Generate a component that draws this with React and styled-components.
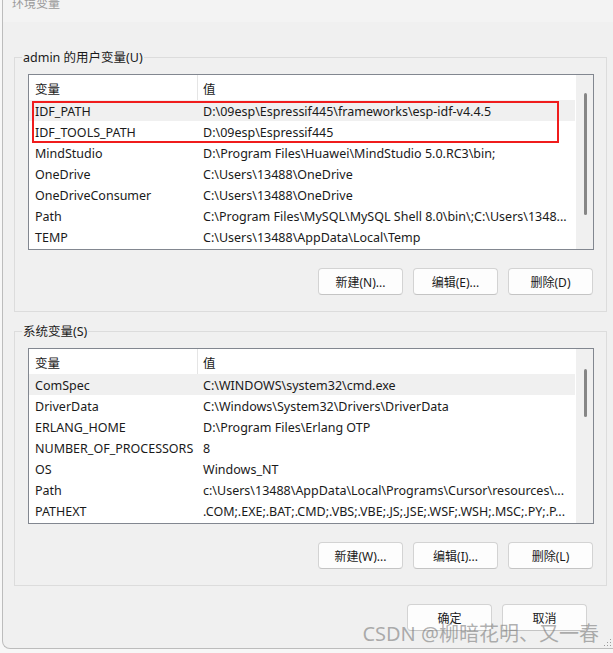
import React from "react";
import styled, { createGlobalStyle } from "styled-components";

const GlobalStyle = createGlobalStyle`
  html, body { margin: 0; padding: 0; background: #f7f7f7; }
  body {
    font-family: "Noto Sans", "Noto Sans CJK SC", sans-serif;
    font-size: 12.5px;
    color: #1a1a1a;
  }
  * { box-sizing: border-box; }
`;

const Window = styled.div`
  position: relative;
  margin-left: 2px;
  width: 611px;
  height: 649px;
  background: #f0f0f0;
  border-left: 1px solid #bcbcbc;
  border-bottom: 1px solid #bcbcbc;
  border-bottom-left-radius: 8px;
  overflow: hidden;
  display: flex;
  flex-direction: column;
`;

const TitleBar = styled.div`
  height: 22px;
  background: #f3f3f3;
  padding-left: 9px;
  overflow: hidden;
`;

const Title = styled.div`
  margin-top: -4px;
  line-height: 16px;
  font-size: 12px;
  color: #9a9a9a;
`;

const Body = styled.div`
  padding: 35px 0 0 11px;
  display: flex;
  flex-direction: column;
`;

const Group = styled.div`
  position: relative;
  width: 593px;
  border: 1px solid #dcdcdc;
  padding: 16px 12px 16px 13px;
  margin-bottom: ${(p) => p.$gap || 0}px;
`;

const GroupLabel = styled.div`
  position: absolute;
  top: -9px;
  left: 7px;
  padding: 0 1px;
  line-height: 17px;
  background: #f0f0f0;
`;

const List = styled.div`
  display: flex;
  height: 176px;
  border: 1px solid #828790;
  background: #fff;
`;

const Table = styled.div`
  flex: 1;
  display: flex;
  flex-direction: column;
  min-width: 0;
`;

const Header = styled.div`
  display: grid;
  grid-template-columns: 169px 1fr;
  height: 25px;
`;

const HeaderCell = styled.div`
  display: flex;
  align-items: center;
  padding-top: 2px;
  padding-left: ${(p) => (p.$key ? 6 : 5)}px;
  border-right: ${(p) => (p.$key ? "1px solid #e5e5e5" : "none")};
`;

const Rows = styled.div`
  position: relative;
`;

const Row = styled.div`
  display: grid;
  grid-template-columns: 169px 1fr;
  height: 21px;
  align-items: center;
  padding-top: 2px;
  background: ${(p) => (p.$selected ? "#f0f0f0" : "transparent")};
`;

const Cell = styled.div`
  padding-left: ${(p) => (p.$key ? 6 : 5)}px;
  white-space: nowrap;
  overflow: hidden;
`;

const Highlight = styled.div`
  position: absolute;
  left: 3px;
  top: 1px;
  width: 527px;
  height: 42px;
  border: 2px solid #f01c1c;
  pointer-events: none;
`;

const Scrollbar = styled.div`
  width: 18px;
  border-left: 1px solid #fff;
  background: #f0f0f0;
  display: flex;
  justify-content: center;
  padding-top: ${(p) => p.$offset}px;
  padding-left: 1px;
`;

const Thumb = styled.div`
  width: 3px;
  border-radius: 2px;
  background: #868686;
`;

const ButtonRow = styled.div`
  display: flex;
  justify-content: flex-end;
  gap: ${(p) => p.$gap || 10}px;
  margin-top: ${(p) => p.$top || 18}px;
  padding-right: ${(p) => p.$right || 1}px;
`;

const Button = styled.button`
  width: 85px;
  height: 27px;
  padding: 1px 0 0;
  font: inherit;
  font-size: 12px;
  color: #1a1a1a;
  background: #fdfdfd;
  border: 1px solid #d3d3d3;
  border-bottom-color: #c4c4c4;
  border-radius: 4px;
`;

const Watermark = styled.div`
  position: absolute;
  right: 14px;
  bottom: 1px;
  font-family: "Noto Sans", "Noto Sans CJK SC", sans-serif;
  font-size: 20px;
  line-height: 26px;
  color: rgba(110, 110, 110, 0.55);
  white-space: nowrap;
`;

const Grip = styled.svg`
  position: absolute;
  right: 1px;
  bottom: 1px;
`;

const userVars = [
  ["IDF_PATH", "D:\\09esp\\Espressif445\\frameworks\\esp-idf-v4.4.5"],
  ["IDF_TOOLS_PATH", "D:\\09esp\\Espressif445"],
  ["MindStudio", "D:\\Program Files\\Huawei\\MindStudio 5.0.RC3\\bin;"],
  ["OneDrive", "C:\\Users\\13488\\OneDrive"],
  ["OneDriveConsumer", "C:\\Users\\13488\\OneDrive"],
  ["Path", "C:\\Program Files\\MySQL\\MySQL Shell 8.0\\bin\\;C:\\Users\\1348..."],
  ["TEMP", "C:\\Users\\13488\\AppData\\Local\\Temp"],
];

const sysVars = [
  ["ComSpec", "C:\\WINDOWS\\system32\\cmd.exe"],
  ["DriverData", "C:\\Windows\\System32\\Drivers\\DriverData"],
  ["ERLANG_HOME", "D:\\Program Files\\Erlang OTP"],
  ["NUMBER_OF_PROCESSORS", "8"],
  ["OS", "Windows_NT"],
  ["Path", "c:\\Users\\13488\\AppData\\Local\\Programs\\Cursor\\resources\\..."],
  ["PATHEXT", ".COM;.EXE;.BAT;.CMD;.VBS;.VBE;.JS;.JSE;.WSF;.WSH;.MSC;.PY;.P..."],
];

function VarList({ rows, thumbTop, thumbHeight, highlight }) {
  return (
    <List>
      <Table>
        <Header>
          <HeaderCell $key>变量</HeaderCell>
          <HeaderCell>值</HeaderCell>
        </Header>
        <Rows>
          {rows.map(([k, v], i) => (
            <Row key={k + i} $selected={i === 0}>
              <Cell $key>{k}</Cell>
              <Cell>{v}</Cell>
            </Row>
          ))}
          {highlight && <Highlight />}
        </Rows>
      </Table>
      <Scrollbar $offset={thumbTop}>
        <Thumb style={{ height: thumbHeight }} />
      </Scrollbar>
    </List>
  );
}

export default function App() {
  return (
    <>
      <GlobalStyle />
      <Window>
        <TitleBar>
          <Title>环境变量</Title>
        </TitleBar>
        <Body>
          <Group $gap={19}>
            <GroupLabel>admin 的用户变量(U)</GroupLabel>
            <VarList rows={userVars} thumbTop={18} thumbHeight={122} highlight />
            <ButtonRow>
              <Button>新建(N)...</Button>
              <Button>编辑(E)...</Button>
              <Button>删除(D)</Button>
            </ButtonRow>
          </Group>
          <Group>
            <GroupLabel>系统变量(S)</GroupLabel>
            <VarList rows={sysVars} thumbTop={20} thumbHeight={48} />
            <ButtonRow>
              <Button>新建(W)...</Button>
              <Button>编辑(I)...</Button>
              <Button>删除(L)</Button>
            </ButtonRow>
          </Group>
          <ButtonRow $top={18} $right={26}>
            <Button>确定</Button>
            <Button>取消</Button>
          </ButtonRow>
        </Body>
        <Watermark>CSDN @柳暗花明、又一春</Watermark>
        <Grip width="8" height="8" viewBox="0 0 8 8">
          <g fill="#9a9a9a">
            <rect x="6" y="0" width="1" height="1" />
            <rect x="3" y="3" width="1" height="1" />
            <rect x="6" y="3" width="1" height="1" />
            <rect x="0" y="6" width="1" height="1" />
            <rect x="3" y="6" width="1" height="1" />
            <rect x="6" y="6" width="1" height="1" />
          </g>
        </Grip>
      </Window>
    </>
  );
}
